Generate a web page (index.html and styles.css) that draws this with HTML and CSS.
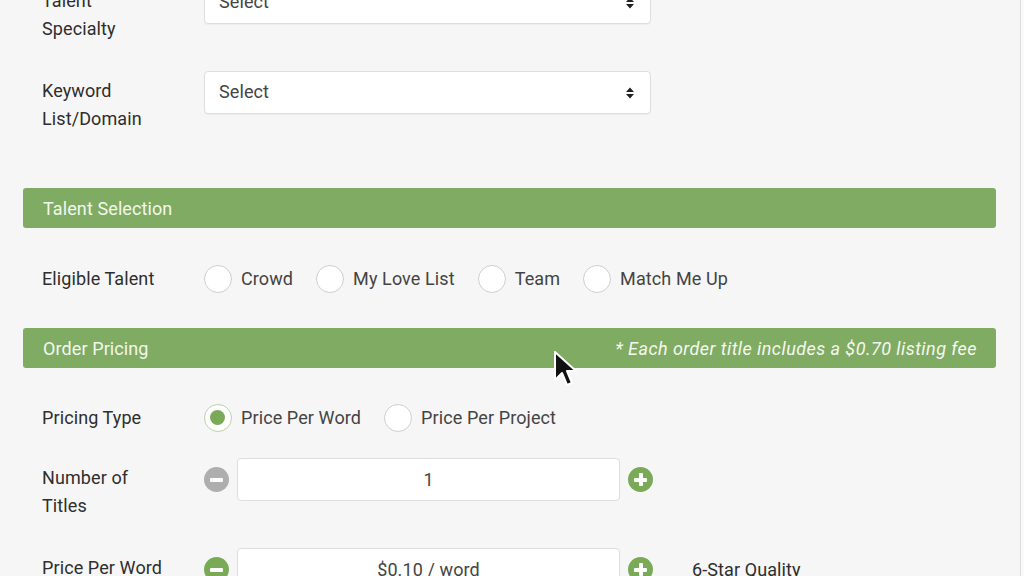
FILE: index.html
```html
<!DOCTYPE html>
<html>
<head>
<meta charset="utf-8">
<link rel="stylesheet" href="styles.css">
</head>
<body>
<div class="page">
  <div class="row">
    <div class="label">Talent<br>Specialty</div>
    <div class="select"><span>Select</span><svg class="caret" width="10" height="14" viewBox="0 0 10 14"><path d="M1 6 L5 1.5 L9 6 Z M1 8 L5 12.5 L9 8 Z" fill="#222"/></svg></div>
  </div>
  <div class="row row-gap">
    <div class="label">Keyword<br>List/Domain</div>
    <div class="select"><span>Select</span><svg class="caret" width="10" height="14" viewBox="0 0 10 14"><path d="M1 6 L5 1.5 L9 6 Z M1 8 L5 12.5 L9 8 Z" fill="#222"/></svg></div>
  </div>

  <div class="bar bar-first"><span>Talent Selection</span></div>

  <div class="row radio-row">
    <div class="label label-inline">Eligible Talent</div>
    <div class="radios">
      <label class="radio"><span class="dot"></span>Crowd</label>
      <label class="radio"><span class="dot"></span>My Love List</label>
      <label class="radio"><span class="dot"></span>Team</label>
      <label class="radio"><span class="dot"></span>Match Me Up</label>
    </div>
  </div>

  <div class="bar bar-second"><span>Order Pricing</span><em class="note">* Each order title includes a $0.70 listing fee</em></div>

  <div class="row radio-row radio-row-2">
    <div class="label label-inline">Pricing Type</div>
    <div class="radios">
      <label class="radio"><span class="dot checked"></span>Price Per Word</label>
      <label class="radio"><span class="dot"></span>Price Per Project</label>
    </div>
  </div>

  <div class="row stepper-row">
    <div class="label">Number of<br>Titles</div>
    <div class="stepper">
      <span class="btn minus off"></span>
      <div class="num">1</div>
      <span class="btn plus"></span>
    </div>
  </div>

  <div class="row row-gap">
    <div class="label">Price Per Word</div>
    <div class="stepper">
      <span class="btn minus"></span>
      <div class="num">$0.10 / word</div>
      <span class="btn plus"></span>
    </div>
    <div class="quality">6-Star Quality</div>
  </div>
</div>
<div class="edge"></div>
<svg class="cursor" width="26" height="38" viewBox="0 0 26 38"><path d="M2 2 L2 30 L9 23 L14 35 L19 33 L14 21 L23 21 Z" fill="#111" stroke="#fff" stroke-width="2" stroke-linejoin="round"/></svg>
</body>
</html>
```
FILE: styles.css
```css
html, body {
  margin: 0;
  padding: 0;
  background: #f6f6f6;
  overflow: hidden;
  height: 576px;
}
body {
  font-family: Roboto, "Liberation Sans", sans-serif;
  font-size: 18px;
  letter-spacing: 0.1px;
  color: #333;
  position: relative;
}
.page {
  width: 973px;
  margin: -19px 0 0 23px;
}
.row {
  display: flex;
  align-items: flex-start;
  padding-left: 19px;
}
.row-gap {
  margin-top: 28px;
}
.label {
  width: 162px;
  flex: none;
  line-height: 28px;
  padding-top: 6px;
  color: #2e2e2e;
}
.label-inline {
  padding-top: 0;
  line-height: 24px;
}
.select {
  width: 447px;
  height: 43px;
  box-sizing: border-box;
  background: #fff;
  border: 1px solid #dedede;
  border-radius: 4px;
  box-shadow: 0 1px 1px rgba(0,0,0,0.04);
  display: flex;
  align-items: center;
  justify-content: space-between;
  padding: 0 15px 0 14px;
  color: #444;
}
.select span {
  margin-top: -2px;
}
.bar {
  height: 40px;
  background: #80ab62;
  border-radius: 3px;
  display: flex;
  align-items: center;
  justify-content: space-between;
  padding: 0 19px 0 20px;
  color: #f2f7ee;
  box-sizing: border-box;
}
.bar-first {
  margin-top: 55px;
}
.bar-second {
  margin-top: 35px;
}
.bar .note {
  font-style: italic;
  color: #f4f8f0;
  letter-spacing: 0.45px;
}
.radio-row {
  margin: 37px 0 0;
  align-items: center;
}
.radio-row-2 {
  margin: 36px 0 0;
}
.radios {
  display: flex;
  align-items: center;
  gap: 23px;
}
.radio {
  display: flex;
  align-items: center;
  color: #444;
  line-height: 28px;
}
.dot {
  width: 28px;
  height: 28px;
  box-sizing: border-box;
  border: 1.5px solid #cfcfcf;
  border-radius: 50%;
  background: #fff;
  margin-right: 9px;
  position: relative;
}
.dot.checked {
  border-color: #b9d3a7;
}
.dot.checked::after {
  content: "";
  position: absolute;
  left: 5px;
  top: 5px;
  width: 15px;
  height: 15px;
  border-radius: 50%;
  background: #7aaa58;
}
.stepper-row {
  margin-top: 26px;
}
.stepper {
  display: flex;
  align-items: center;
  gap: 8px;
}
.num {
  width: 383px;
  height: 43px;
  box-sizing: border-box;
  background: #fff;
  border: 1px solid #dedede;
  border-radius: 4px;
  display: flex;
  align-items: center;
  justify-content: center;
  color: #444;
}
.btn {
  width: 25px;
  height: 25px;
  border-radius: 50%;
  background: #7aaa58;
  position: relative;
  flex: none;
}
.btn.off {
  background: #aeaeae;
}
.btn::before {
  content: "";
  position: absolute;
  left: 6px;
  top: 10.5px;
  width: 13px;
  height: 4px;
  background: #fff;
  border-radius: 1px;
}
.btn.plus::after {
  content: "";
  position: absolute;
  left: 10.5px;
  top: 6px;
  width: 4px;
  height: 13px;
  background: #fff;
  border-radius: 1px;
}
.quality {
  margin-left: 39px;
  line-height: 43px;
  color: #2e2e2e;
}
.edge {
  position: absolute;
  top: 0;
  right: 0;
  width: 3px;
  height: 576px;
  border-left: 1px solid #dcdcdc;
  background: #fafafa;
}
.cursor {
  position: absolute;
  left: 553px;
  top: 350px;
}
```
